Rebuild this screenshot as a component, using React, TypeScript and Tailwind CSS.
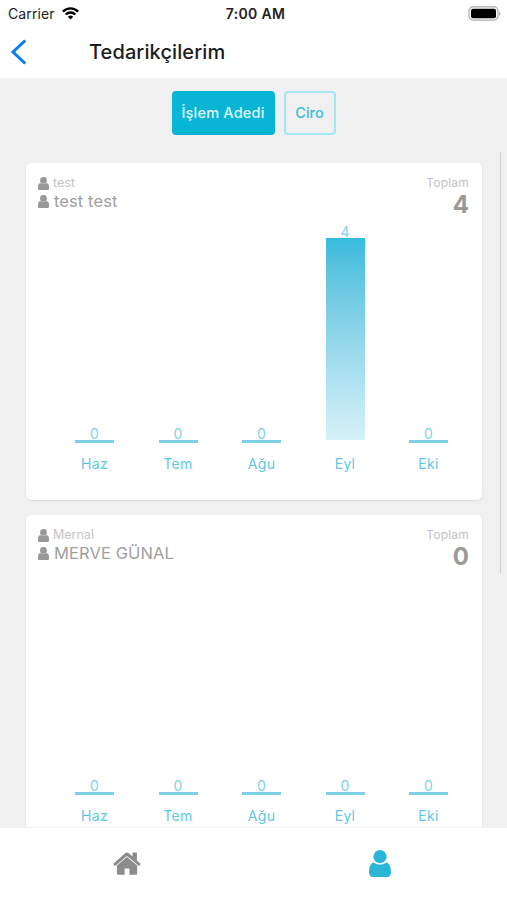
interface MonthValue {
    month: string;
    value: number;
}

interface Supplier {
    name: string;
    company: string;
    total: number;
    months: MonthValue[];
}

const BAR_AREA_HEIGHT = 202;

const SUPPLIERS: Supplier[] = [
    {
        name: "test",
        company: "test test",
        total: 4,
        months: [
            { month: "Haz", value: 0 },
            { month: "Tem", value: 0 },
            { month: "Ağu", value: 0 },
            { month: "Eyl", value: 4 },
            { month: "Eki", value: 0 },
        ],
    },
    {
        name: "Mernal",
        company: "MERVE GÜNAL",
        total: 0,
        months: [
            { month: "Haz", value: 0 },
            { month: "Tem", value: 0 },
            { month: "Ağu", value: 0 },
            { month: "Eyl", value: 0 },
            { month: "Eki", value: 0 },
        ],
    },
];

function PersonIcon({ className }: { className?: string }) {
    return (
        <svg viewBox="0 0 22 27" fill="currentColor" className={className}>
            <circle cx="11" cy="6.7" r="6.6" />
            <path d="M5 12.4C1.4 12.9 0 17 0 22.3C0 25.2 1.6 27 4.2 27h13.6c2.6 0 4.2-1.8 4.2-4.7c0-5.3-1.4-9.4-5-9.9c-1.5 1.3-3.6 2.1-6 2.1s-4.5-.8-6-2.1z" />
        </svg>
    );
}

/* the small one by a supplier's name has squarer shoulders */
function SmallPersonIcon() {
    return (
        <svg viewBox="0 0 11 13" fill="currentColor" className="h-[13px] w-[11px] text-[#999]">
            <circle cx="5.5" cy="3.4" r="3.4" />
            <path d="M2.4 5.9C.7 6.2 0 7.5 0 9.4v2c0 .9.7 1.6 1.6 1.6h7.8c.9 0 1.6-.7 1.6-1.6v-2c0-1.9-.7-3.2-2.4-3.5c-.8.7-1.9 1.2-3.1 1.2s-2.3-.5-3.1-1.2z" />
        </svg>
    );
}

function HomeIcon() {
    return (
        <svg viewBox="0 0 28 23" fill="currentColor" className="h-[23px] w-7 text-[#8c8c8c]">
            <path d="M14 5L3.9 13.5v7.9c0 .8.6 1.4 1.4 1.4h6.3v-6.2h4.8v6.2h6.3c.8 0 1.4-.6 1.4-1.4v-7.9z" />
            <path d="M27.4 11.5L23.9 8.5V1.2c0-.5-.3-.8-.8-.8h-2.8c-.5 0-.8.3-.8.8v3.3L15.6 1.1c-.9-.8-2.3-.8-3.2 0L.6 11.5c-.3.3-.3.7-.1 1l.9 1.1c.3.3.7.3 1 .1L14 3.9l11.6 9.8c.3.2.7.2 1-.1l.9-1.1c.2-.3.2-.7-.1-1z" />
        </svg>
    );
}

function StatusBar() {
    return (
        <div className="grid h-[27px] grid-cols-3 items-center pl-2 pr-[6px] text-[#222]">
            <div className="flex items-center gap-[7px]">
                <span className="text-[14px] tracking-[0.1px]">Carrier</span>
                <svg viewBox="0 0 17 13" className="h-[13px] w-[17px]" fill="none" stroke="#000" strokeWidth="2.3">
                    <path d="M.9 4.6a10.7 10.7 0 0 1 15.2 0" />
                    <path d="M3.7 7.5a6.8 6.8 0 0 1 9.6 0" />
                    <path d="M8.5 12.5L5.8 9.8a3.8 3.8 0 0 1 5.4 0z" fill="#000" stroke="none" />
                </svg>
            </div>
            <span className="whitespace-nowrap pl-[2px] text-center text-[14px] font-semibold tracking-[0.3px]">7:00 AM</span>
            <svg viewBox="0 0 33 15" className="h-[15px] w-[33px] justify-self-end">
                <rect x="1" y=".9" width="29" height="13.2" rx="4" fill="#fff" stroke="#aaa" strokeWidth="1.2" />
                <rect x="3" y="2.8" width="25" height="9.4" rx="2" fill="#000" />
                <path d="M31.3 5.5c1.4.6 1.4 3.4 0 4z" fill="#999" />
            </svg>
        </div>
    );
}

function Header() {
    return (
        <div className="flex h-[52px] items-center border-b border-[#f6f6f6] pb-[2px] pl-[10px]">
            <svg viewBox="0 0 17 26" className="h-[26px] w-[17px]" fill="none" stroke="#087cf8" strokeWidth="3">
                <path d="M15.2 1.5L3 13l12.2 11.5" />
            </svg>
            <h1 className="ml-[62px] text-[20px] font-medium tracking-[0.1px] text-[#1c1c1c]">Tedarikçilerim</h1>
        </div>
    );
}

function MonthBar({ month, value, max }: MonthValue & { max: number }) {
    return (
        <div className="flex w-[39px] flex-col items-center">
            <span className="text-[14px] leading-[13px] text-[#7fd2e6]">{value}</span>
            {value > 0 ? (
                <div
                    className="mb-[3px] w-full bg-linear-to-b from-[#36bbdb] to-[#d6f1f8]"
                    style={{ height: (value / max) * BAR_AREA_HEIGHT }}
                />
            ) : (
                <div className="h-[3px] w-full bg-[#7dd0e5]" />
            )}
            <span className="mt-[11px] text-[14px] leading-5 tracking-[0.3px] text-[#5fc7df]">{month}</span>
        </div>
    );
}

function SupplierCard({ supplier }: { supplier: Supplier }) {
    const max = Math.max(1, ...supplier.months.map((m) => m.value));

    return (
        <div className="flex h-[337px] shrink-0 flex-col rounded-[5px] bg-white pt-[11px] shadow-[0_1px_2px_rgba(0,0,0,0.1)]">
            <div className="flex justify-between pl-3 pr-[13px]">
                <div>
                    <div className="flex h-[18px] items-center gap-1">
                        <SmallPersonIcon />
                        <span className="pt-px text-[12.5px] text-[#c4c4c4]">{supplier.name}</span>
                    </div>
                    <div className="flex h-[18px] items-center gap-[5px]">
                        <SmallPersonIcon />
                        <span className="text-[16.5px] tracking-[0.1px] text-[#a0a0a0]">{supplier.company}</span>
                    </div>
                </div>
                <div className="flex flex-col items-end">
                    <span className="text-[12px] leading-[17px] tracking-[0.2px] text-[#c2c2c2]">Toplam</span>
                    <span className="text-[24px] font-bold leading-[28px] text-[#999]">{supplier.total}</span>
                </div>
            </div>
            <div className="mt-auto flex items-end justify-between pl-[49px] pr-[34px] pb-[26px]">
                {supplier.months.map((m) => (
                    <MonthBar key={m.month} month={m.month} value={m.value} max={max} />
                ))}
            </div>
        </div>
    );
}

export default function App() {
    return (
        <div className="relative flex h-[900px] w-[507px] flex-col overflow-hidden bg-white font-['Inter',sans-serif]">
            <StatusBar />
            <Header />
            <main className="flex min-h-0 flex-1 flex-col overflow-hidden bg-[#f0f0f0]">
                <div className="flex shrink-0 justify-center gap-[9px] pt-3">
                    <button
                        type="button"
                        className="h-11 w-[103px] rounded-[4px] bg-[#09b5d4] text-[14.5px] font-medium tracking-[0.2px] text-[#e0f8fc]"
                    >
                        İşlem Adedi
                    </button>
                    <button
                        type="button"
                        className="h-11 w-[52px] rounded-[4px] border-2 border-[#a5e6f0] text-[14.5px] font-medium text-[#35bdd8]"
                    >
                        Ciro
                    </button>
                </div>
                <div className="mt-7 flex flex-col gap-[15px] pl-[26px] pr-[25px]">
                    {SUPPLIERS.map((s) => (
                        <SupplierCard key={s.name} supplier={s} />
                    ))}
                </div>
            </main>
            <nav className="flex h-[73px] shrink-0 border-t border-[#f2f2f2] bg-white">
                <button type="button" className="flex flex-1 items-start justify-center pt-6">
                    <HomeIcon />
                </button>
                <button type="button" className="flex flex-1 items-start justify-center pt-[22px]">
                    <PersonIcon className="h-[27px] w-[22px] text-[#2bb6d7]" />
                </button>
            </nav>
            {/* scroll indicator */}
            <div className="absolute right-[6px] top-[152px] h-[421px] w-px bg-[#cfcfcf]" />
        </div>
    );
}
